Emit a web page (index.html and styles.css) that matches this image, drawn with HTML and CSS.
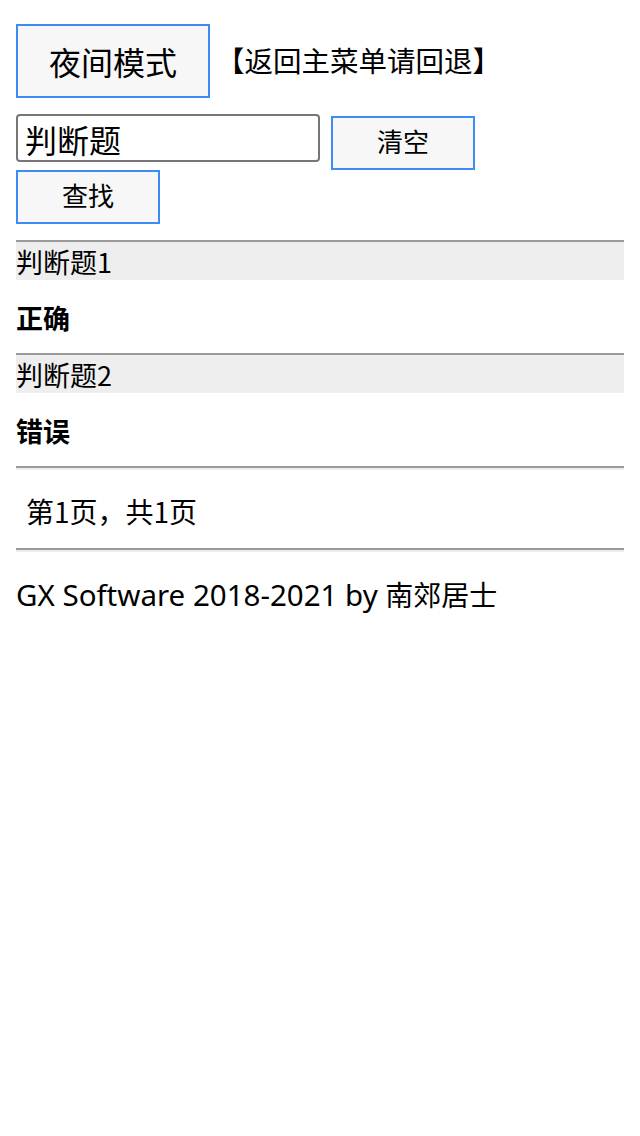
FILE: index.html
```
<!DOCTYPE html>
<html lang="zh-CN">
<head>
<meta charset="utf-8">
<title>判断题</title>
<link rel="stylesheet" href="styles.css">
</head>
<body>
<div class="page">
  <div class="top">
    <button class="btn night">夜间模式</button>
    <span class="back">【返回主菜单请回退】</span>
  </div>
  <div class="search">
    <input class="kw" type="text" value="判断题">
    <button class="btn small clear">清空</button>
    <button class="btn small">查找</button>
  </div>
  <div class="list">
    <hr class="rule">
    <div class="q-title">判断题1</div>
    <div class="q-ans">正确</div>
    <hr class="rule">
    <div class="q-title">判断题2</div>
    <div class="q-ans">错误</div>
    <hr class="rule">
  </div>
  <div class="pager">第1页，共1页</div>
  <hr class="rule">
  <div class="footer"><span class="en">GX Software 2018-2021 by </span>南郊居士</div>
</div>
</body>
</html>
```
FILE: styles.css
```
html, body {
  margin: 0;
  padding: 0;
  background: #fff;
}
body {
  font-family: "Noto Sans", "Noto Sans CJK SC", sans-serif;
  color: #000;
}
.page {
  padding: 24px 16px;
}
.top {
  display: flex;
  align-items: center;
  gap: 6px;
}
.btn {
  box-sizing: border-box;
  background: #f7f7f7;
  border: 2px solid #3b8cf4;
  border-radius: 0;
  color: #000;
  font-family: "Noto Sans CJK SC", sans-serif;
  padding: 0;
  margin: 0;
}
.night {
  width: 194px;
  height: 74px;
  font-size: 32px;
}
.back {
  font-family: "Noto Sans CJK SC", sans-serif;
  font-size: 28.5px;
  line-height: 40px;
  padding-bottom: 3px;
}
.search {
  margin-top: 16px;
  display: flex;
  flex-wrap: wrap;
  align-items: flex-start;
  column-gap: 11px;
}
.kw {
  box-sizing: border-box;
  width: 304px;
  height: 48px;
  border: 2px solid #767676;
  border-radius: 4px;
  padding: 2px 7px 0;
  font-family: "Noto Sans CJK SC", sans-serif;
  font-size: 32px;
  color: #000;
  margin: 0;
}
.small {
  width: 144px;
  height: 54px;
  font-size: 26px;
  padding-bottom: 5px;
}
.clear {
  margin-top: 2px;
}
.list {
  margin-top: 16px;
}
.rule {
  margin: 0;
  height: 0;
  border: 0;
  border-top: 2px solid #9a9a9a;
  border-bottom: 2px solid #eeeeee;
}
.q-title {
  background: #eeeeee;
  height: 36px;
  line-height: 36px;
  font-family: "Noto Sans CJK SC", sans-serif;
  font-size: 27px;
}
.q-ans {
  height: 73px;
  box-sizing: border-box;
  padding-top: 2px;
  line-height: 71px;
  font-family: "Noto Sans CJK SC", sans-serif;
  font-size: 27px;
  font-weight: bold;
}
.pager {
  padding: 22px 0 18px 10px;
  line-height: 38px;
  font-family: "Noto Sans CJK SC", sans-serif;
  font-size: 28px;
}
.footer {
  margin-top: 22px;
  line-height: 40px;
  font-size: 28px;
  font-family: "Noto Sans CJK SC", sans-serif;
}
.footer .en {
  font-family: "Noto Sans", sans-serif;
  font-size: 29.5px;
}
```
